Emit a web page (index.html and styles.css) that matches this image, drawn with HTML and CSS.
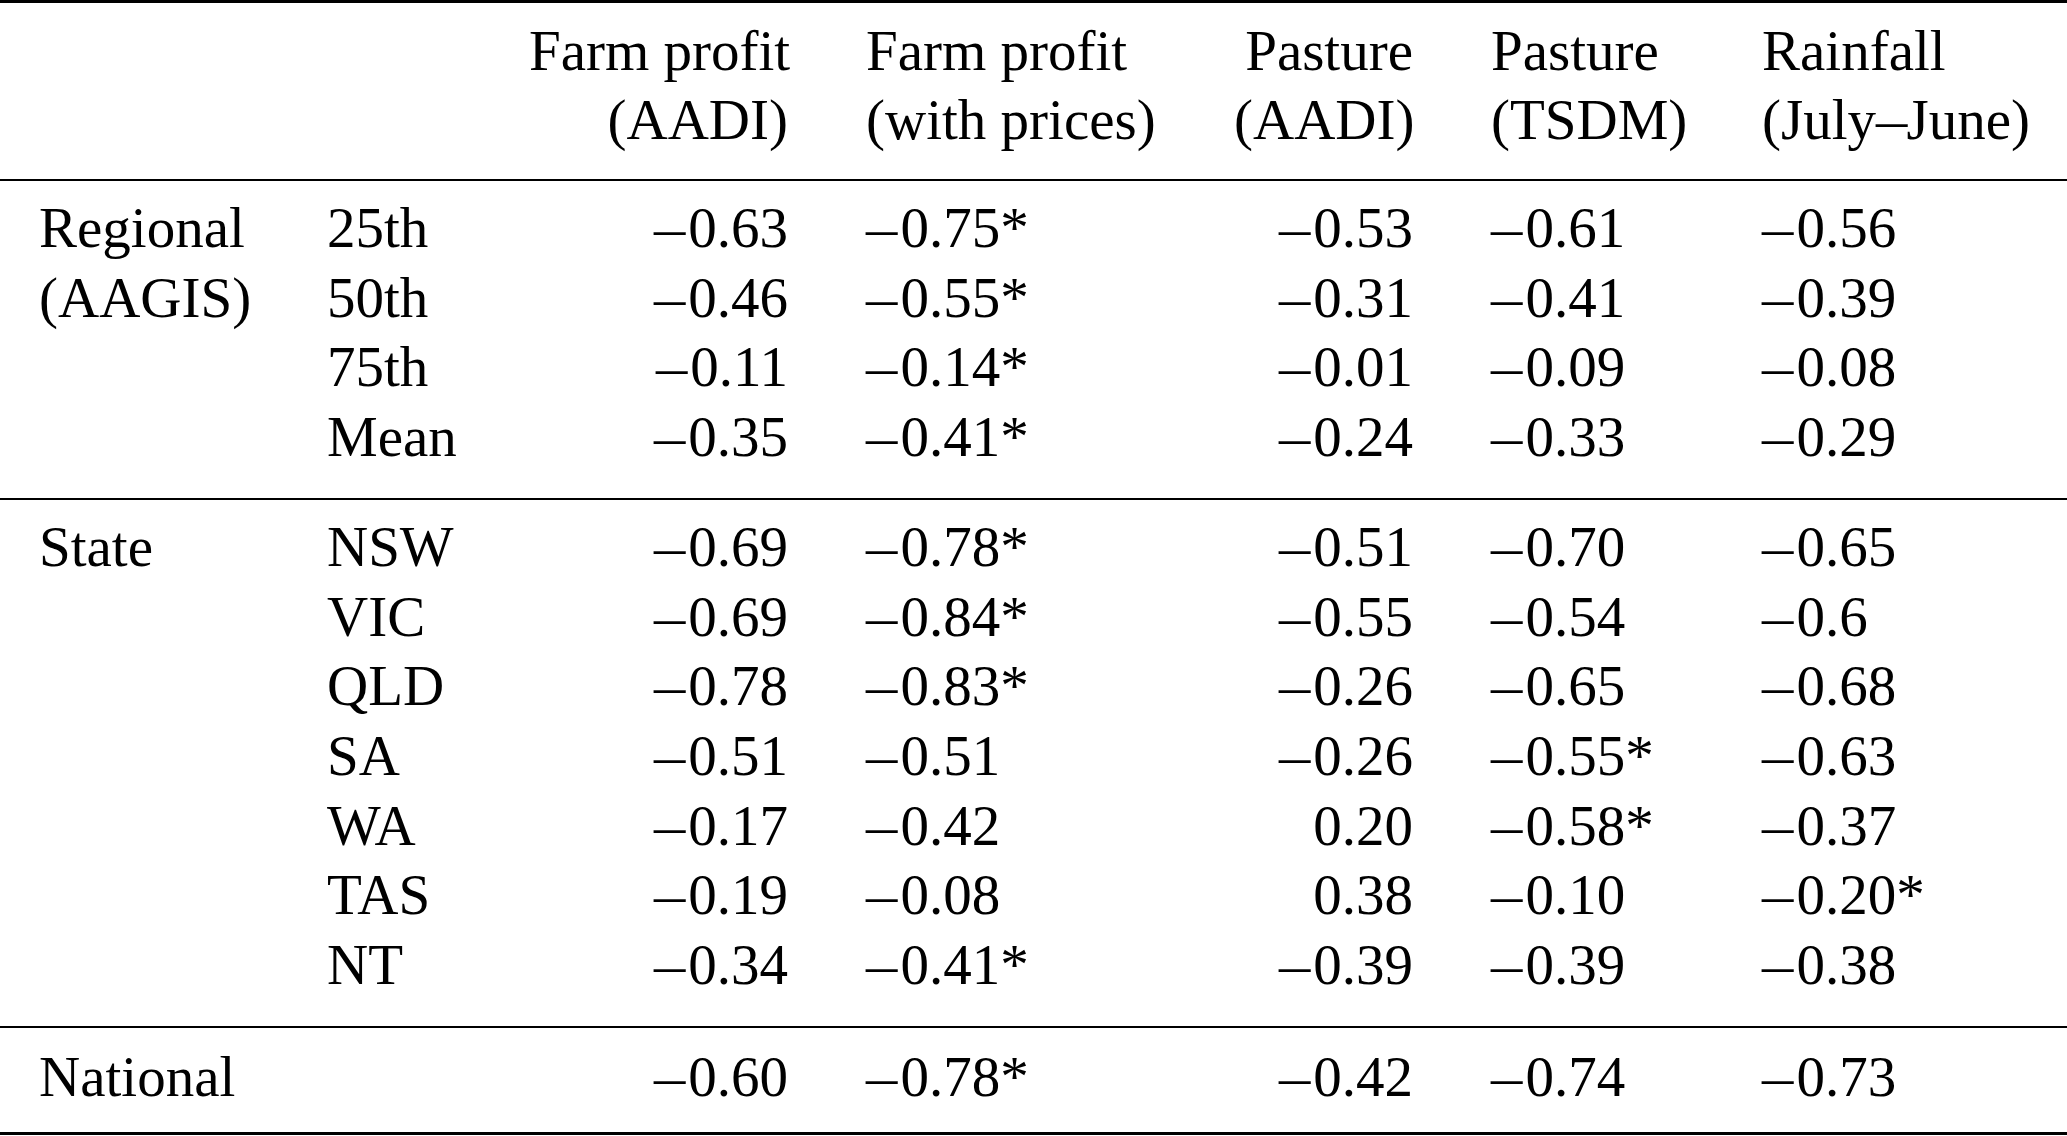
FILE: index.html
```html
<!DOCTYPE html>
<html lang="en">
<head>
<meta charset="utf-8">
<title>Correlations table</title>
<link rel="stylesheet" href="styles.css">
</head>
<body>
<table class="tbl">
  <colgroup>
    <col class="c0"><col class="c1"><col class="c2"><col class="c3"><col class="c4"><col class="c5"><col class="c6">
  </colgroup>
  <thead class="head">
    <tr>
      <th class="l"></th>
      <th class="l"></th>
      <th class="r">Farm profit<br>(AADI)</th>
      <th class="l">Farm profit<br>(with prices)</th>
      <th class="r">Pasture<br>(AADI)</th>
      <th class="l">Pasture<br>(TSDM)</th>
      <th class="l">Rainfall<br>(July<span class="dash">–</span>June)</th>
    </tr>
  </thead>
  <tbody class="grp">
    <tr class="first"><td class="l">Regional</td><td class="l">25th</td><td class="r"><span class="m">–</span>0.63</td><td class="l"><span class="m">–</span>0.75*</td><td class="r"><span class="m">–</span>0.53</td><td class="l"><span class="m">–</span>0.61</td><td class="l"><span class="m">–</span>0.56</td></tr>
    <tr><td class="l">(AAGIS)</td><td class="l">50th</td><td class="r"><span class="m">–</span>0.46</td><td class="l"><span class="m">–</span>0.55*</td><td class="r"><span class="m">–</span>0.31</td><td class="l"><span class="m">–</span>0.41</td><td class="l"><span class="m">–</span>0.39</td></tr>
    <tr><td class="l"></td><td class="l">75th</td><td class="r"><span class="m">–</span>0.11</td><td class="l"><span class="m">–</span>0.14*</td><td class="r"><span class="m">–</span>0.01</td><td class="l"><span class="m">–</span>0.09</td><td class="l"><span class="m">–</span>0.08</td></tr>
    <tr class="last"><td class="l"></td><td class="l">Mean</td><td class="r"><span class="m">–</span>0.35</td><td class="l"><span class="m">–</span>0.41*</td><td class="r"><span class="m">–</span>0.24</td><td class="l"><span class="m">–</span>0.33</td><td class="l"><span class="m">–</span>0.29</td></tr>
  </tbody>
  <tbody class="grp">
    <tr class="first"><td class="l">State</td><td class="l">NSW</td><td class="r"><span class="m">–</span>0.69</td><td class="l"><span class="m">–</span>0.78*</td><td class="r"><span class="m">–</span>0.51</td><td class="l"><span class="m">–</span>0.70</td><td class="l"><span class="m">–</span>0.65</td></tr>
    <tr><td class="l"></td><td class="l">VIC</td><td class="r"><span class="m">–</span>0.69</td><td class="l"><span class="m">–</span>0.84*</td><td class="r"><span class="m">–</span>0.55</td><td class="l"><span class="m">–</span>0.54</td><td class="l"><span class="m">–</span>0.6</td></tr>
    <tr><td class="l"></td><td class="l">QLD</td><td class="r"><span class="m">–</span>0.78</td><td class="l"><span class="m">–</span>0.83*</td><td class="r"><span class="m">–</span>0.26</td><td class="l"><span class="m">–</span>0.65</td><td class="l"><span class="m">–</span>0.68</td></tr>
    <tr><td class="l"></td><td class="l">SA</td><td class="r"><span class="m">–</span>0.51</td><td class="l"><span class="m">–</span>0.51</td><td class="r"><span class="m">–</span>0.26</td><td class="l"><span class="m">–</span>0.55*</td><td class="l"><span class="m">–</span>0.63</td></tr>
    <tr><td class="l"></td><td class="l">WA</td><td class="r"><span class="m">–</span>0.17</td><td class="l"><span class="m">–</span>0.42</td><td class="r">0.20</td><td class="l"><span class="m">–</span>0.58*</td><td class="l"><span class="m">–</span>0.37</td></tr>
    <tr><td class="l"></td><td class="l">TAS</td><td class="r"><span class="m">–</span>0.19</td><td class="l"><span class="m">–</span>0.08</td><td class="r">0.38</td><td class="l"><span class="m">–</span>0.10</td><td class="l"><span class="m">–</span>0.20*</td></tr>
    <tr class="last"><td class="l"></td><td class="l">NT</td><td class="r"><span class="m">–</span>0.34</td><td class="l"><span class="m">–</span>0.41*</td><td class="r"><span class="m">–</span>0.39</td><td class="l"><span class="m">–</span>0.39</td><td class="l"><span class="m">–</span>0.38</td></tr>
  </tbody>
  <tbody class="grp final">
    <tr class="first last"><td class="l">National</td><td class="l"></td><td class="r"><span class="m">–</span>0.60</td><td class="l"><span class="m">–</span>0.78*</td><td class="r"><span class="m">–</span>0.42</td><td class="l"><span class="m">–</span>0.74</td><td class="l"><span class="m">–</span>0.73</td></tr>
  </tbody>
</table>
</body>
</html>
```
FILE: styles.css
```css
html, body {
  margin: 0;
  padding: 0;
  background: #ffffff;
}

.tbl {
  width: 2067px;
  table-layout: fixed;
  border-collapse: collapse;
  border-spacing: 0;
  font-family: "Liberation Serif", "Times New Roman", serif;
  font-size: 57px;
  color: #000000;
}

.c0 { width: 288px; }
.c1 { width: 202px; }
.c2 { width: 337px; }
.c3 { width: 368px; }
.c4 { width: 257px; }
.c5 { width: 271px; }
.c6 { width: 344px; }

.tbl th,
.tbl td {
  padding: 0 39px;
  font-weight: normal;
  white-space: nowrap;
  vertical-align: top;
}

.tbl .l { text-align: left; }
.tbl .r { text-align: right; }

/* minus sign: slightly wider dash with a small gap before the digits */
.m {
  display: inline-block;
  transform: scaleX(1.1);
  transform-origin: left center;
  margin-right: 6px;
}

.dash {
  display: inline-block;
  transform: scaleX(1.1);
  transform-origin: left center;
  margin-right: 2px;
}

.head {
  border-top: 3px solid #000000;
}

.head th {
  line-height: 69px;
  padding-top: 13px;
  padding-bottom: 25px;
}

.grp {
  border-top: 2px solid #000000;
}

.grp td {
  line-height: 69.7px;
  height: 69.7px;
}

.grp .first td {
  padding-top: 12px;
}

.grp .last td {
  padding-bottom: 26px;
}

.final {
  border-bottom: 3px solid #000000;
}

.final .first td {
  padding-top: 14px;
}

.final .last td {
  padding-bottom: 21px;
}
```
